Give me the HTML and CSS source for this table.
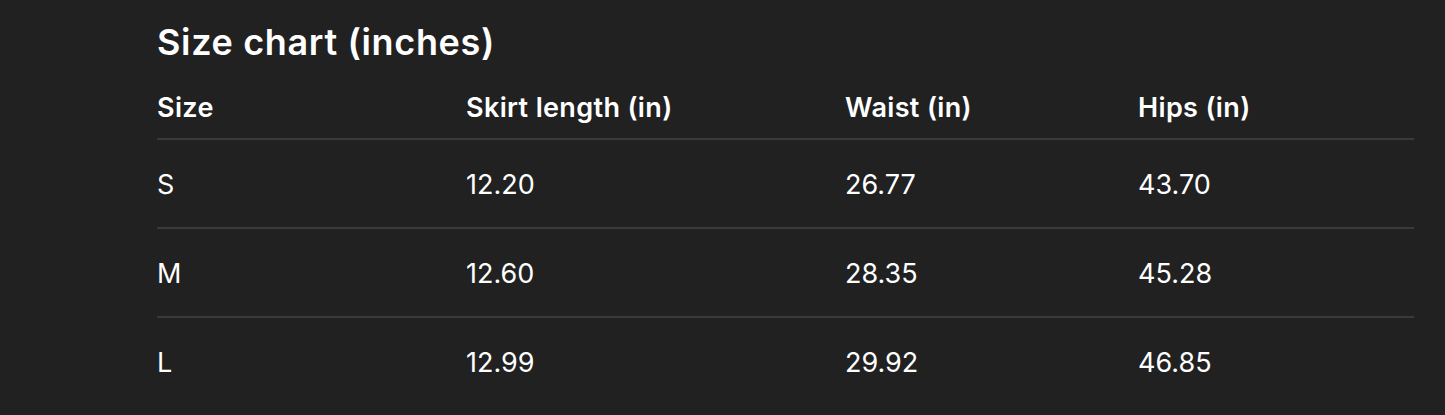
FILE: index.html
```html
<!DOCTYPE html>
<html lang="en">
<head>
<meta charset="utf-8">
<title>Size chart</title>
<link rel="stylesheet" href="styles.css">
</head>
<body>
<main class="chart">
  <h2 class="chart-title">Size chart (inches)</h2>
  <div class="table">
    <div class="row head">
      <div class="cell">Size</div>
      <div class="cell">Skirt length (in)</div>
      <div class="cell">Waist (in)</div>
      <div class="cell">Hips (in)</div>
    </div>
    <div class="row">
      <div class="cell">S</div>
      <div class="cell">12.20</div>
      <div class="cell">26.77</div>
      <div class="cell">43.70</div>
    </div>
    <div class="row">
      <div class="cell">M</div>
      <div class="cell">12.60</div>
      <div class="cell">28.35</div>
      <div class="cell">45.28</div>
    </div>
    <div class="row last">
      <div class="cell">L</div>
      <div class="cell">12.99</div>
      <div class="cell">29.92</div>
      <div class="cell">46.85</div>
    </div>
  </div>
</main>
</body>
</html>
```
FILE: styles.css
```css
html, body {
  margin: 0;
  padding: 0;
  background: #212121;
}
body {
  font-family: Inter, "Noto Sans", "Liberation Sans", sans-serif;
  color: #ffffff;
  -webkit-font-smoothing: antialiased;
}
.chart {
  padding: 18px 31px 0 157px;
}
.chart-title {
  margin: 0;
  font-size: 36px;
  font-weight: 600;
  line-height: 48px;
  letter-spacing: 0.65px;
}
.table {
  display: flex;
  flex-direction: column;
  margin-top: 17px;
}
.row {
  display: grid;
  grid-template-columns: 309px 379px 293px 1fr;
  align-items: center;
  height: 87px;
  border-bottom: 2px solid #3a3a3a;
  font-size: 27px;
  font-weight: 400;
}
.row .cell {
  padding-top: 3px;
}
.row.head {
  height: 55px;
  align-items: start;
  font-weight: 600;
  letter-spacing: 0.35px;
}
.row.head .cell {
  padding-top: 9px;
}
.row.last {
  border-bottom: none;
}
.cell {
  line-height: 32px;
  white-space: nowrap;
}
```
